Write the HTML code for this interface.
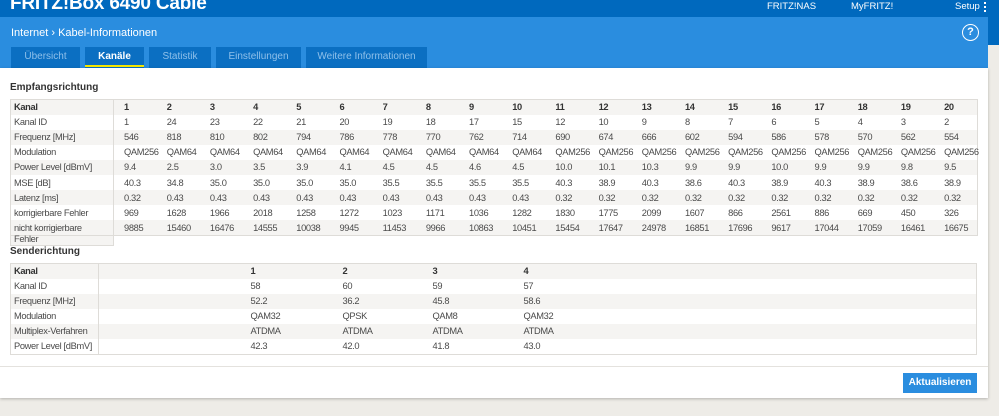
<!DOCTYPE html><html><head><meta charset="utf-8"><style>
*{margin:0;padding:0;box-sizing:border-box}
body{width:999px;height:416px;overflow:hidden;background:#eeece7;font-family:"Liberation Sans",sans-serif;position:relative;color:#4a4a4a}
.top{position:absolute;left:0;top:0;width:999px;height:17px;background:#0069be}
.title{position:absolute;left:10px;top:-7px;color:#fff;font-weight:bold;font-size:19px;letter-spacing:-0.2px}
.tl{position:absolute;top:1px;color:#fff;font-size:9.5px}
.band{position:absolute;left:0;top:17px;width:988px;height:51px;background:#2a8ddf}
.rstrip{position:absolute;left:988px;top:17px;width:11px;height:28px;background:#0069be}
.crumb{position:absolute;left:11px;top:27px;color:#fff;font-size:11px}
.help{position:absolute;left:962px;top:24px;width:17px;height:17px;border:1.6px solid #fff;border-radius:50%;color:#fff;font-size:11px;font-weight:bold;text-align:center;line-height:14px}
.tab{position:absolute;top:47px;height:21px;background:#0b6fc2;color:#8fc0ea;font-size:10px;text-align:center;line-height:20px}
.tab.act{color:#fff;font-weight:bold}
.tab.act:after{content:"";position:absolute;left:0;right:0;bottom:1px;height:2px;background:#f5e600}
.panel{position:absolute;left:0;top:68px;width:988px;height:330px;background:#fff;box-shadow:0 1px 3px rgba(0,0,0,.25)}
h3{position:absolute;left:10px;font-size:10px;font-weight:bold;color:#333}
table{position:absolute;left:10px;border-collapse:collapse;border:1px solid #dedcd8;font-size:9.3px;letter-spacing:-0.35px;table-layout:fixed}
td{height:15.1px;padding:0 0 0 3px;white-space:nowrap;vertical-align:middle;line-height:12px;overflow:visible}
tr:nth-child(odd){background:#f5f4f2}
td.l{border-right:1px solid #dedcd8;padding-left:3px}
tr:first-child td{font-weight:bold;color:#333}
.d td:not(.l){padding-left:10px}
.btn{position:absolute;left:903px;top:373px;width:74px;height:20px;background:#2a8ddf;color:#fff;font-size:10px;font-weight:bold;text-align:center;line-height:20px}
.hr{position:absolute;left:0;top:366px;width:988px;height:1px;background:#e4e2de}
.fe{position:absolute;left:10px;top:236px;width:104px;height:10px;background:#f5f4f2;border:1px solid #dedcd8;border-top:none;font-size:9.3px;letter-spacing:-0.35px;padding-left:3px;line-height:7px}
</style></head><body>
<div class="top"><div class="title">FRITZ!Box 6490 Cable</div>
<div class="tl" style="left:767px">FRITZ!NAS</div><div class="tl" style="left:851px">MyFRITZ!</div><div class="tl" style="left:955px">Setup</div>
<div style="position:absolute;left:984px;top:2px;width:2px;height:2px;background:#fff;box-shadow:0 4px #fff,0 8px #fff"></div></div>
<div class="band"></div><div class="rstrip"></div>
<div class="crumb">Internet &#8250; Kabel-Informationen</div>
<div class="help">?</div>
<div class="tab" style="left:11px;width:69px">Übersicht</div>
<div class="tab act" style="left:85px;width:59px">Kanäle</div>
<div class="tab" style="left:149px;width:62px">Statistik</div>
<div class="tab" style="left:216px;width:85px">Einstellungen</div>
<div class="tab" style="left:306px;width:121px">Weitere Informationen</div>
<div class="panel"></div>
<h3 style="top:82px">Empfangsrichtung</h3>
<table class="d" style="top:99px;width:967px">
<colgroup><col style="width:103px"><col span="20" style="width:43.2px"></colgroup>
<tr><td class="l">Kanal</td><td>1</td><td>2</td><td>3</td><td>4</td><td>5</td><td>6</td><td>7</td><td>8</td><td>9</td><td>10</td><td>11</td><td>12</td><td>13</td><td>14</td><td>15</td><td>16</td><td>17</td><td>18</td><td>19</td><td>20</td></tr>
<tr><td class="l">Kanal ID</td><td>1</td><td>24</td><td>23</td><td>22</td><td>21</td><td>20</td><td>19</td><td>18</td><td>17</td><td>15</td><td>12</td><td>10</td><td>9</td><td>8</td><td>7</td><td>6</td><td>5</td><td>4</td><td>3</td><td>2</td></tr>
<tr><td class="l">Frequenz [MHz]</td><td>546</td><td>818</td><td>810</td><td>802</td><td>794</td><td>786</td><td>778</td><td>770</td><td>762</td><td>714</td><td>690</td><td>674</td><td>666</td><td>602</td><td>594</td><td>586</td><td>578</td><td>570</td><td>562</td><td>554</td></tr>
<tr><td class="l">Modulation</td><td>QAM256</td><td>QAM64</td><td>QAM64</td><td>QAM64</td><td>QAM64</td><td>QAM64</td><td>QAM64</td><td>QAM64</td><td>QAM64</td><td>QAM64</td><td>QAM256</td><td>QAM256</td><td>QAM256</td><td>QAM256</td><td>QAM256</td><td>QAM256</td><td>QAM256</td><td>QAM256</td><td>QAM256</td><td>QAM256</td></tr>
<tr><td class="l">Power Level [dBmV]</td><td>9.4</td><td>2.5</td><td>3.0</td><td>3.5</td><td>3.9</td><td>4.1</td><td>4.5</td><td>4.5</td><td>4.6</td><td>4.5</td><td>10.0</td><td>10.1</td><td>10.3</td><td>9.9</td><td>9.9</td><td>10.0</td><td>9.9</td><td>9.9</td><td>9.8</td><td>9.5</td></tr>
<tr><td class="l">MSE [dB]</td><td>40.3</td><td>34.8</td><td>35.0</td><td>35.0</td><td>35.0</td><td>35.0</td><td>35.5</td><td>35.5</td><td>35.5</td><td>35.5</td><td>40.3</td><td>38.9</td><td>40.3</td><td>38.6</td><td>40.3</td><td>38.9</td><td>40.3</td><td>38.9</td><td>38.6</td><td>38.9</td></tr>
<tr><td class="l">Latenz [ms]</td><td>0.32</td><td>0.43</td><td>0.43</td><td>0.43</td><td>0.43</td><td>0.43</td><td>0.43</td><td>0.43</td><td>0.43</td><td>0.43</td><td>0.32</td><td>0.32</td><td>0.32</td><td>0.32</td><td>0.32</td><td>0.32</td><td>0.32</td><td>0.32</td><td>0.32</td><td>0.32</td></tr>
<tr><td class="l">korrigierbare Fehler</td><td>969</td><td>1628</td><td>1966</td><td>2018</td><td>1258</td><td>1272</td><td>1023</td><td>1171</td><td>1036</td><td>1282</td><td>1830</td><td>1775</td><td>2099</td><td>1607</td><td>866</td><td>2561</td><td>886</td><td>669</td><td>450</td><td>326</td></tr>
<tr><td class="l">nicht korrigierbare</td><td>9885</td><td>15460</td><td>16476</td><td>14555</td><td>10038</td><td>9945</td><td>11453</td><td>9966</td><td>10863</td><td>10451</td><td>15454</td><td>17647</td><td>24978</td><td>16851</td><td>17696</td><td>9617</td><td>17044</td><td>17059</td><td>16461</td><td>16675</td></tr>
</table>
<div class="fe">Fehler</div>
<h3 style="top:246px">Senderichtung</h3>
<table style="top:263px;width:967px">
<colgroup><col style="width:88px"><col style="width:149px"><col style="width:92px"><col style="width:90px"><col style="width:91px"><col></colgroup>
<tr><td class="l">Kanal</td><td></td><td>1</td><td>2</td><td>3</td><td>4</td></tr>
<tr><td class="l">Kanal ID</td><td></td><td>58</td><td>60</td><td>59</td><td>57</td></tr>
<tr><td class="l">Frequenz [MHz]</td><td></td><td>52.2</td><td>36.2</td><td>45.8</td><td>58.6</td></tr>
<tr><td class="l">Modulation</td><td></td><td>QAM32</td><td>QPSK</td><td>QAM8</td><td>QAM32</td></tr>
<tr><td class="l">Multiplex-Verfahren</td><td></td><td>ATDMA</td><td>ATDMA</td><td>ATDMA</td><td>ATDMA</td></tr>
<tr><td class="l">Power Level [dBmV]</td><td></td><td>42.3</td><td>42.0</td><td>41.8</td><td>43.0</td></tr>
</table>
<div class="hr"></div>
<div class="btn">Aktualisieren</div>
</body></html>
